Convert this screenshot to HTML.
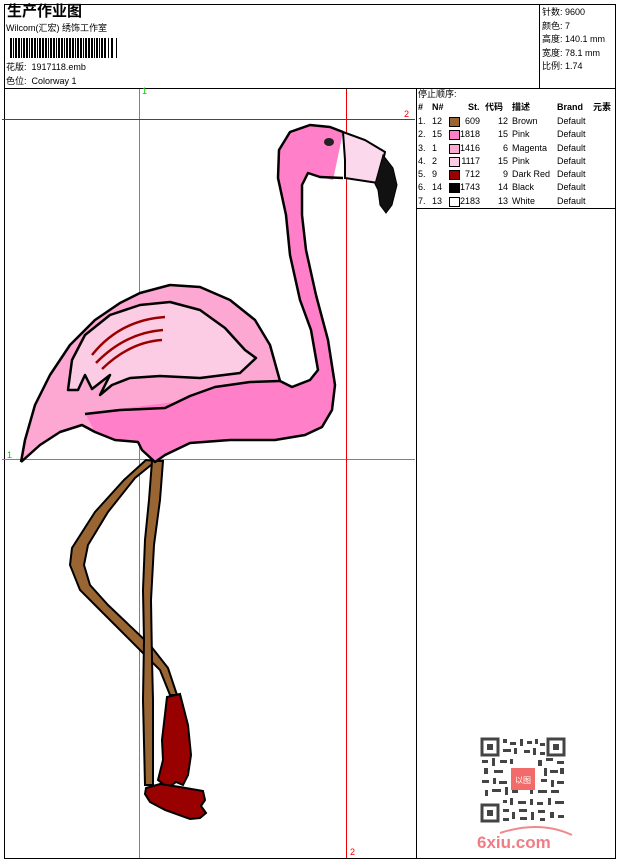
<!DOCTYPE html>
<html><head><meta charset="utf-8"><style>
*{margin:0;padding:0}
body{width:620px;height:860px;background:#fff;position:relative;overflow:hidden;font-family:"Liberation Sans","WenQuanYi Zen Hei","Noto Sans CJK SC",sans-serif;color:#000}
.t{position:absolute;font-size:9px;line-height:11px;white-space:nowrap}
</style></head><body>
<svg width="620" height="860" style="position:absolute;left:0;top:0">
<g fill="none" stroke="#000" stroke-width="1">
<rect x="4.5" y="4.5" width="611" height="854"/>
<line x1="4" y1="88.5" x2="616" y2="88.5"/>
<line x1="539.5" y1="4" x2="539.5" y2="88"/>
<line x1="416.5" y1="88" x2="416.5" y2="858"/>
<line x1="416" y1="208.5" x2="616" y2="208.5"/>
</g>
<g fill="#000">
<rect x="10" y="38" width="2" height="20"/><rect x="13" y="38" width="1" height="20"/><rect x="15" y="38" width="2" height="20"/><rect x="18" y="38" width="2" height="20"/><rect x="21" y="38" width="1" height="20"/><rect x="23" y="38" width="2" height="20"/><rect x="26" y="38" width="2" height="20"/><rect x="29" y="38" width="1" height="20"/><rect x="31" y="38" width="2" height="20"/><rect x="34" y="38" width="2" height="20"/><rect x="37" y="38" width="1" height="20"/><rect x="39" y="38" width="2" height="20"/><rect x="42" y="38" width="2" height="20"/><rect x="45" y="38" width="2" height="20"/><rect x="48" y="38" width="1" height="20"/><rect x="50" y="38" width="2" height="20"/><rect x="53" y="38" width="2" height="20"/><rect x="56" y="38" width="1" height="20"/><rect x="58" y="38" width="2" height="20"/><rect x="61" y="38" width="2" height="20"/><rect x="64" y="38" width="1" height="20"/><rect x="66" y="38" width="2" height="20"/><rect x="69" y="38" width="2" height="20"/><rect x="72" y="38" width="2" height="20"/><rect x="75" y="38" width="1" height="20"/><rect x="77" y="38" width="2" height="20"/><rect x="80" y="38" width="2" height="20"/><rect x="83" y="38" width="1" height="20"/><rect x="85" y="38" width="2" height="20"/><rect x="88" y="38" width="2" height="20"/><rect x="91" y="38" width="2" height="20"/><rect x="94" y="38" width="1" height="20"/><rect x="96" y="38" width="2" height="20"/><rect x="99" y="38" width="1" height="20"/><rect x="101" y="38" width="2" height="20"/><rect x="104" y="38" width="2" height="20"/><rect x="108" y="38" width="1" height="20"/><rect x="111" y="38" width="2" height="20"/><rect x="116" y="38" width="1" height="20"/>
</g>
<line x1="139.5" y1="89" x2="139.5" y2="858" stroke="#00dd00"/>
<line x1="2" y1="459.5" x2="415" y2="459.5" stroke="#00dd00"/>
<line x1="2" y1="119.5" x2="415" y2="119.5" stroke="#ee0000"/>
<line x1="346.5" y1="89" x2="346.5" y2="858" stroke="#ee0000"/>
<g stroke="#000" stroke-width="2" fill="#996633">
<path d="M146,460 L124,480 L95,512 L72,548 L70,565 L80,590 L100,610 L140,650 L160,670 L170,695 L177,695 L168,668 L150,645 L108,605 L90,585 L84,565 L88,545 L108,512 L135,478 L156,461 Z"/>
<path d="M152,461 L163,461 L160,500 L154,545 L151,600 L152,660 L153,700 L153,785 L145,785 L143,700 L144,640 L143,590 L145,540 L149,500 Z"/>
</g>
<g stroke="#000" stroke-width="2" fill="#990000">
<path d="M167,697 L180,694 L188,725 L191,755 L188,775 L183,785 L176,782 L168,788 L158,780 L163,760 L162,740 Z"/>
<path d="M146,788 L160,784 L180,787 L203,791 L205,800 L201,806 L206,813 L200,818 L190,819 L165,810 L150,802 L145,794 Z"/>
</g>
<path fill="#fca8d2" d="M21,462 L25,440 L35,405 L50,375 L70,345 L95,320 L120,303 L140,293 L170,285 L200,287 L230,300 L255,320 L270,345 L280,381 L292,387 L310,380 L318,370 L311,330 L300,300 L290,255 L286,215 L278,178 L279,150 L290,132 L310,125 L330,127 L343,132 L333,180 L320,177 L308,173 L302,185 L302,215 L306,250 L316,295 L328,340 L335,385 L332,410 L322,427 L305,435 L275,440 L230,440 L190,443 L165,455 L155,462 L142,450 L138,442 L115,440 L95,432 L82,425 L60,432 L40,445 Z"/>
<path fill="#ff80c8" d="M85,413 L110,410 L150,405 L175,402 L200,392 L240,383 L280,381 L292,387 L310,380 L318,370 L311,330 L300,300 L290,255 L286,215 L278,178 L279,150 L290,132 L310,125 L330,127 L343,132 L333,180 L320,177 L308,173 L302,185 L302,215 L306,250 L316,295 L328,340 L335,385 L332,410 L322,427 L305,435 L275,440 L230,440 L190,443 L165,455 L155,462 L142,450 L138,442 L115,440 L95,432 Z"/>
<g fill="none" stroke="#000" stroke-width="2.5" stroke-linejoin="round">
<path d="M21,462 L25,440 L35,405 L50,375 L70,345 L95,320 L120,303 L140,293 L170,285 L200,287 L230,300 L255,320 L270,345 L280,381 L292,387 L310,380 L318,370 L311,330 L300,300 L290,255 L286,215 L278,178 L279,150 L290,132 L310,125 L330,127 L343,132"/>
<path d="M343,178 L320,177 L308,173 L302,185 L302,215 L306,250 L316,295 L328,340 L335,385 L332,410 L322,427 L305,435 L275,440 L230,440 L190,443 L165,455 L155,462 L142,450 L138,442 L115,440 L95,432 L82,425 L60,432 L40,445 L21,462"/>
<path d="M85,414 L120,410 L165,408 L190,396 L215,387 L250,382 L280,381"/>
</g>
<path fill="#fccce4" stroke="#000" stroke-width="2.5" stroke-linejoin="round" d="M68,390 L72,360 L85,335 L110,315 L140,305 L170,302 L200,310 L225,328 L245,350 L256,358 L240,373 L200,378 L160,376 L130,378 L112,385 L100,395 L110,375 L92,389 L85,375 L78,390 Z"/>
<g stroke="#990000" stroke-width="2.5" fill="none">
<path d="M92,355 Q120,320 165,317"/><path d="M96,363 Q125,333 163,330"/><path d="M102,369 Q130,342 162,340"/>
</g>
<path fill="#fcd8ec" stroke="#000" stroke-width="2" d="M343,132 L365,140 L385,152 L378,183 L345,178 L345,160 Z"/>
<path fill="#111" stroke="#000" stroke-width="1" d="M383,155 L393,168 L397,185 L392,205 L386,213 L380,205 L378,190 L375,184 Z"/>
<ellipse cx="329" cy="142" rx="5" ry="4" fill="#222"/>
<g fill="#444">
<rect x="481" y="738" width="84" height="84" fill="#fff"/>
<rect x="482" y="739" width="16" height="16" fill="none" stroke="#444" stroke-width="3"/>
<rect x="548" y="739" width="16" height="16" fill="none" stroke="#444" stroke-width="3"/>
<rect x="482" y="805" width="16" height="16" fill="none" stroke="#444" stroke-width="3"/>
<rect x="487" y="744" width="6" height="6"/><rect x="553" y="744" width="6" height="6"/><rect x="487" y="810" width="6" height="6"/>
<path d="M503,739h4v4h-4zM510,742h6v3h-6zM520,739h3v7h-3zM527,741h5v3h-5zM535,739h3v5h-3zM540,743h5v3h-5zM503,749h8v3h-8zM514,748h3v6h-3zM524,750h6v3h-6zM533,748h3v7h-3zM540,752h5v3h-5zM482,760h6v3h-6zM492,758h3v8h-3zM500,760h7v3h-7zM510,759h3v5h-3zM538,760h4v6h-4zM546,758h7v3h-7zM557,761h7v3h-7zM484,768h4v6h-4zM494,770h9v3h-9zM544,768h3v8h-3zM550,770h8v3h-8zM560,768h4v6h-4zM482,780h7v3h-7zM493,778h3v6h-3zM499,781h8v3h-8zM541,779h6v3h-6zM551,780h3v7h-3zM557,781h7v3h-7zM485,790h3v6h-3zM492,789h9v3h-9zM505,787h3v8h-3zM512,790h6v3h-6zM530,788h3v6h-3zM538,790h9v3h-9zM551,790h8v3h-8zM503,800h4v3h-4zM510,798h3v7h-3zM518,801h8v3h-8zM530,799h3v6h-3zM537,802h6v3h-6zM548,798h3v7h-3zM555,801h9v3h-9zM503,809h6v3h-6zM512,812h3v7h-3zM519,809h8v3h-8zM531,812h3v8h-3zM538,810h7v3h-7zM550,812h4v6h-4zM558,815h6v3h-6zM503,818h6v3h-6zM520,817h7v3h-7zM540,818h5v3h-5z"/>
</g>
<rect x="511" y="768" width="24" height="22" fill="#f26b6b"/>
<text x="523" y="783" font-size="8" fill="#fff" text-anchor="middle" font-family="WenQuanYi Zen Hei,sans-serif">以图</text>
<path d="M500,833 Q540,820 572,835" stroke="#f08a8a" stroke-width="2" fill="none"/>
<text x="477" y="848" font-size="17" font-weight="bold" fill="#f07c85" font-family="Liberation Sans,sans-serif">6xiu.com</text>
</svg>
<div class="t" style="left:7px;top:3px;font-size:15px;line-height:17px;font-weight:bold">生产作业图</div>
<div class="t" style="left:6px;top:23px">Wilcom(汇宏) 绣饰工作室</div>
<div class="t" style="left:6px;top:62px">花版:&nbsp; 1917118.emb</div>
<div class="t" style="left:6px;top:76px">色位:&nbsp; Colorway 1</div>
<div class="t" style="left:542px;top:6px;line-height:13.5px">针数: 9600<br>颜色: 7<br>高度: 140.1 mm<br>宽度: 78.1 mm<br>比例: 1.74</div>
<div class="t" style="left:142px;top:86px;color:#00cc00">1</div>
<div class="t" style="left:404px;top:109px;color:#e00">2</div>
<div class="t" style="left:7px;top:450px;color:#00cc00">1</div>
<div class="t" style="left:350px;top:847px;color:#e00">2</div>
<div class="t" style="left:418px;top:89px">停止顺序:</div>
<div style="position:absolute;left:418px;top:101px;font-size:9px;line-height:13.3px;white-space:nowrap">
<div style="position:relative;height:13px;font-weight:bold;text-decoration:underline">
<span style="position:absolute;left:0">#</span><span style="position:absolute;left:14px">N#</span><span style="position:absolute;left:50px">St.</span><span style="position:absolute;left:67px">代码</span><span style="position:absolute;left:94px">描述</span><span style="position:absolute;left:139px">Brand</span><span style="position:absolute;left:175px">元素</span></div>
</div>
<div style="position:absolute;left:418px;top:115px;font-size:9px;line-height:13.3px;white-space:nowrap">
<div style="position:relative;height:13.3px"><span style="position:absolute">1.</span><span style="position:absolute;left:14px">12</span><span style="position:absolute;left:31px;top:2px;width:9px;height:8px;background:#996633;border:1px solid #000"></span><span style="position:absolute;left:42px;width:20px;text-align:right">609</span><span style="position:absolute;left:70px;width:20px;text-align:right">12</span><span style="position:absolute;left:94px">Brown</span><span style="position:absolute;left:139px">Default</span></div>
<div style="position:relative;height:13.3px"><span style="position:absolute">2.</span><span style="position:absolute;left:14px">15</span><span style="position:absolute;left:31px;top:2px;width:9px;height:8px;background:#ff80c8;border:1px solid #000"></span><span style="position:absolute;left:42px;width:20px;text-align:right">1818</span><span style="position:absolute;left:70px;width:20px;text-align:right">15</span><span style="position:absolute;left:94px">Pink</span><span style="position:absolute;left:139px">Default</span></div>
<div style="position:relative;height:13.3px"><span style="position:absolute">3.</span><span style="position:absolute;left:14px">1</span><span style="position:absolute;left:31px;top:2px;width:9px;height:8px;background:#fca8d2;border:1px solid #000"></span><span style="position:absolute;left:42px;width:20px;text-align:right">1416</span><span style="position:absolute;left:70px;width:20px;text-align:right">6</span><span style="position:absolute;left:94px">Magenta</span><span style="position:absolute;left:139px">Default</span></div>
<div style="position:relative;height:13.3px"><span style="position:absolute">4.</span><span style="position:absolute;left:14px">2</span><span style="position:absolute;left:31px;top:2px;width:9px;height:8px;background:#fccce4;border:1px solid #000"></span><span style="position:absolute;left:42px;width:20px;text-align:right">1117</span><span style="position:absolute;left:70px;width:20px;text-align:right">15</span><span style="position:absolute;left:94px">Pink</span><span style="position:absolute;left:139px">Default</span></div>
<div style="position:relative;height:13.3px"><span style="position:absolute">5.</span><span style="position:absolute;left:14px">9</span><span style="position:absolute;left:31px;top:2px;width:9px;height:8px;background:#990000;border:1px solid #000"></span><span style="position:absolute;left:42px;width:20px;text-align:right">712</span><span style="position:absolute;left:70px;width:20px;text-align:right">9</span><span style="position:absolute;left:94px">Dark Red</span><span style="position:absolute;left:139px">Default</span></div>
<div style="position:relative;height:13.3px"><span style="position:absolute">6.</span><span style="position:absolute;left:14px">14</span><span style="position:absolute;left:31px;top:2px;width:9px;height:8px;background:#000;border:1px solid #000"></span><span style="position:absolute;left:42px;width:20px;text-align:right">1743</span><span style="position:absolute;left:70px;width:20px;text-align:right">14</span><span style="position:absolute;left:94px">Black</span><span style="position:absolute;left:139px">Default</span></div>
<div style="position:relative;height:13.3px"><span style="position:absolute">7.</span><span style="position:absolute;left:14px">13</span><span style="position:absolute;left:31px;top:2px;width:9px;height:8px;background:#fff;border:1px solid #000"></span><span style="position:absolute;left:42px;width:20px;text-align:right">2183</span><span style="position:absolute;left:70px;width:20px;text-align:right">13</span><span style="position:absolute;left:94px">White</span><span style="position:absolute;left:139px">Default</span></div>
</div>
</body></html>
